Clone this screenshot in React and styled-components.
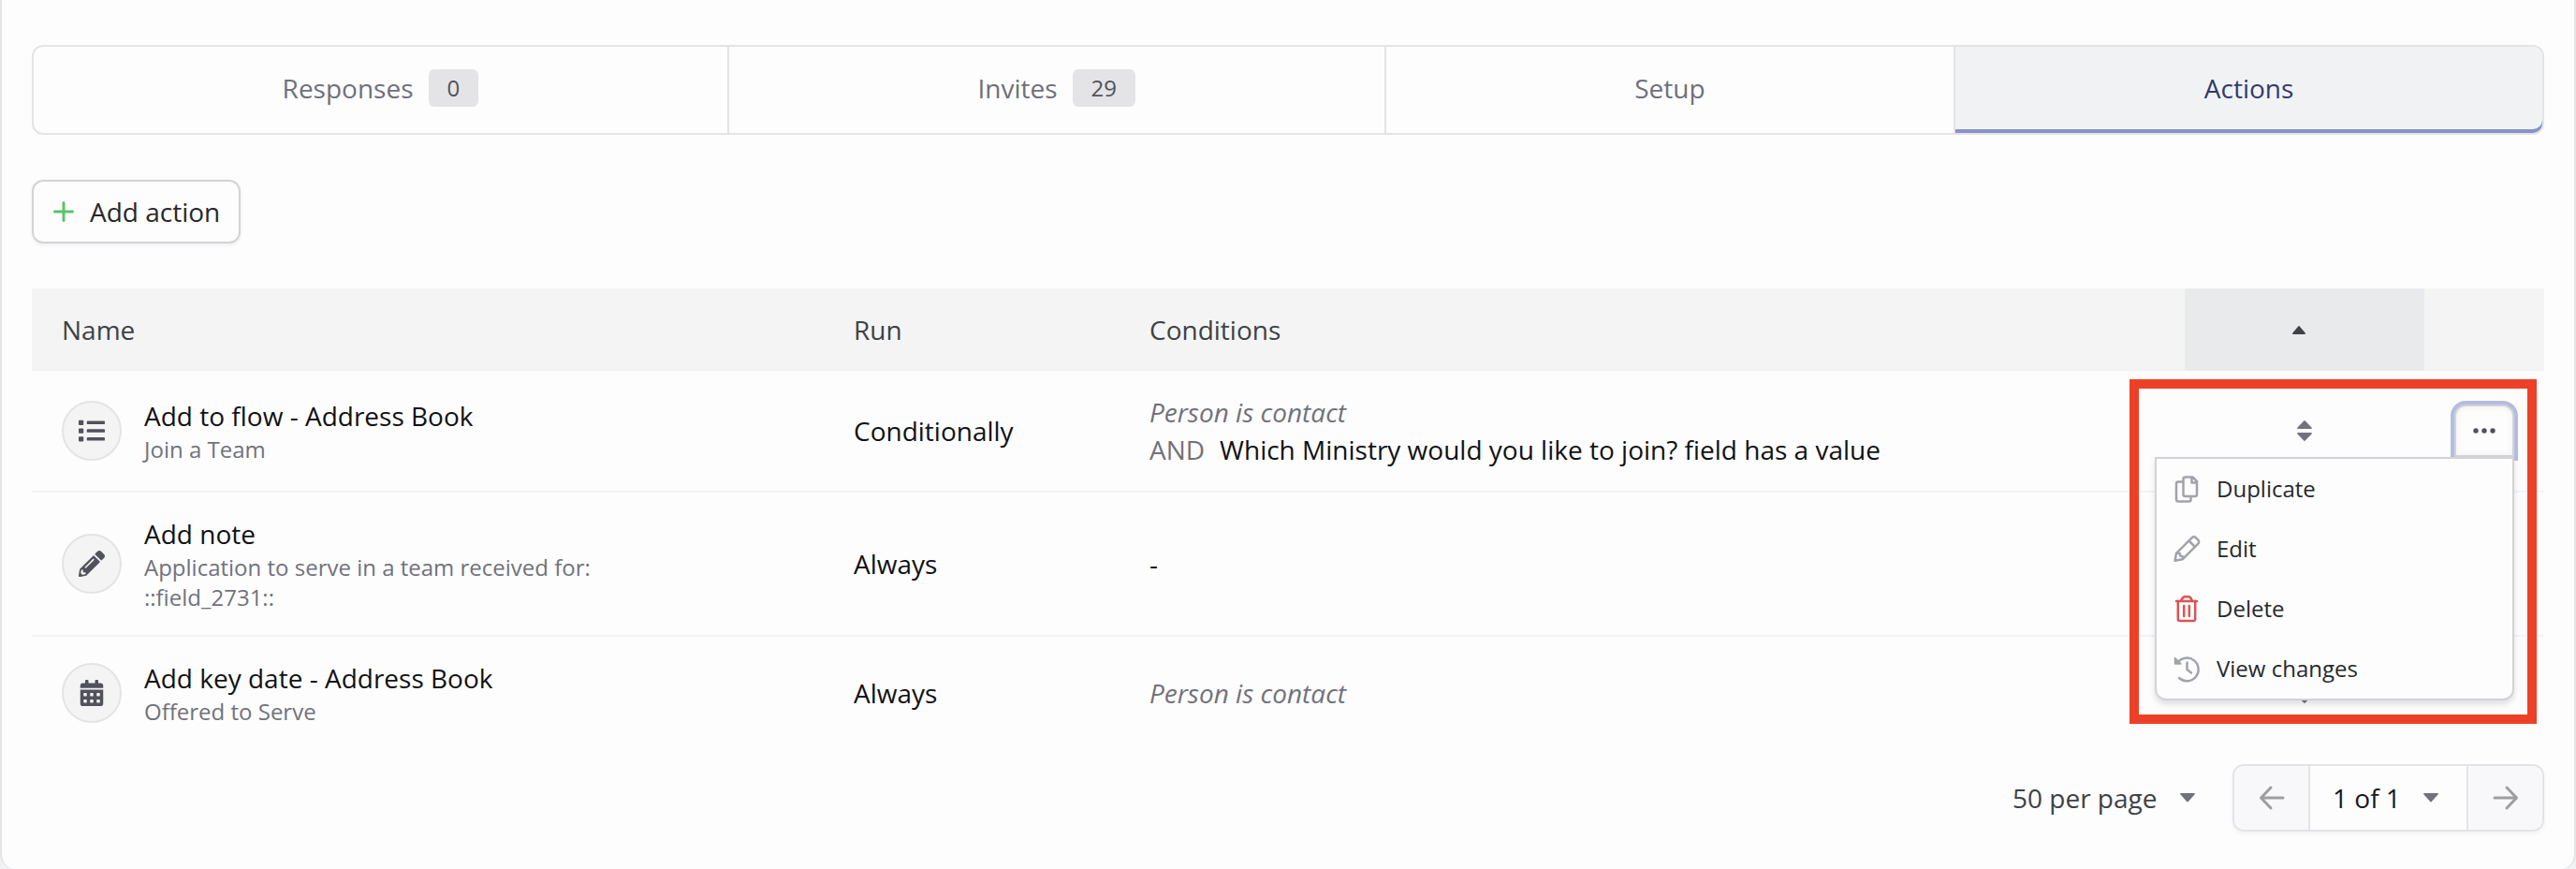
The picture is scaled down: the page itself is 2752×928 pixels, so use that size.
import React from "react";
import styled, { createGlobalStyle } from "styled-components";
import { FaList, FaPencilAlt, FaCalendarAlt } from "react-icons/fa";

const GlobalStyle = createGlobalStyle`
  * {
    box-sizing: border-box;
  }
  body {
    margin: 0;
    background: #f1f2f4;
    color: #111214;
    font-family: "Open Sans", "Noto Sans", sans-serif;
    font-size: 28px;
    line-height: 40px;
  }
  button, select {
    font: inherit;
    color: inherit;
    margin: 0;
    padding: 0;
    border: 0;
    background: none;
  }
`
const Card = styled.main`
  padding: 48px 32px 40px;
  background: #fdfdfe;
  border: solid #e3e4e6;
  border-width: 0 2px;
  border-radius: 0 0 16px 16px;
`
const Tabs = styled.nav`
  display: flex;
  height: 96px;
  border: 2px solid #e3e4e6;
  border-radius: 12px;
`
const Tab = styled.button`
  flex: 1 1 auto;
  display: flex;
  align-items: center;
  justify-content: center;
  gap: 16px;
  padding-bottom: 4px;
  color: ${({ $active }) => ($active ? "#333a6c" : "#6f7079")};
  background: ${({ $active }) => ($active ? "#f1f2f4" : "transparent")};
  box-shadow: ${({ $active }) => ($active ? "inset 0 -4px #8792c7" : "none")};

  &:not(:last-child) {
    border-right: 2px solid #e3e4e6;
  }
  &:last-child {
    border-radius: 0 10px 10px 0;
  }
`
const Badge = styled.span`
  padding: 0 20px;
  border-radius: 6px;
  background: #e4e4e6;
  color: #51525b;
  font-size: 24px;
`
const AddButton = styled.button`
  display: flex;
  align-items: center;
  gap: 16px;
  height: 68px;
  margin: 48px 0;
  padding: 0 20px;
  border: 2px solid #d2d3d6;
  border-radius: 12px;
  color: #27282b;
  box-shadow: 0 2px 4px rgba(0, 0, 0, 0.06);

  svg {
    color: #5cc368;
  }
`
const Table = styled.table`
  width: 100%;
  table-layout: fixed;
  border-collapse: collapse;
`
const HeadCell = styled.th`
  width: ${({ $width }) => $width || "auto"};
  height: 88px;
  padding: 0 32px;
  text-align: left;
  font-weight: 400;
  color: #404145;
  background: ${({ $sorted }) => ($sorted ? "#e9eaec" : "#f4f4f4")};
`
const SortButton = styled.button`
  display: flex;
  justify-content: center;
  width: 100%;
  padding-right: 12px;
  color: #404145;
`
const Row = styled.tr`
  &:not(:last-child) td {
    box-shadow: inset 0 -2px #f2f3f5;
    padding-bottom: 26px;
  }
`
const Cell = styled.td`
  padding: 24px 32px;
  vertical-align: middle;
`
const NameBox = styled.div`
  display: flex;
  align-items: center;
  gap: 24px;
`
const RoundIcon = styled.span`
  display: flex;
  align-items: center;
  justify-content: center;
  flex: none;
  width: 64px;
  height: 64px;
  border: 2px solid #e3e4e6;
  border-radius: 50%;
  background: #f4f4f5;
  color: #51525b;
`
const Detail = styled.div`
  font-size: 24px;
  line-height: 32px;
  color: #71727b;
  white-space: pre-line;
`
const Muted = styled.span`
  color: #71727b;
  margin-right: 16px;
`
const Contact = styled.em`
  color: #71727b;
`
const Handle = styled.div`
  display: flex;
  justify-content: center;
  color: #71727b;
`
const MenuAnchor = styled.div`
  position: relative;
  width: 64px;
  height: 56px;
`
const MoreButton = styled.button`
  display: flex;
  align-items: center;
  justify-content: center;
  width: 64px;
  height: 56px;
  border: 2px solid #d2d3d6;
  border-radius: 12px 12px 0 0;
  background: #fdfdfe;
  color: #51525b;
  box-shadow: 0 0 0 4px #b4bddf, inset 0 0 8px rgba(0, 0, 0, 0.06);
`
const Menu = styled.div`
  position: absolute;
  z-index: 2;
  top: 100%;
  right: 0;
  width: 384px;
  border: 2px solid #d2d3d6;
  border-radius: 0 0 12px 12px;
  background: #fdfdfe;
  box-shadow: 0 4px 6px rgba(0, 0, 0, 0.12);
`
const MenuItem = styled.button`
  display: flex;
  align-items: center;
  gap: 16px;
  width: 100%;
  height: 64px;
  padding: 0 16px;
  font-size: 24px;
  color: #27282b;

  svg {
    color: ${({ $danger }) => ($danger ? "#e05252" : "#a2a3ab")};
  }
`
const Highlight = styled.div`
  position: absolute;
  z-index: 3;
  top: -27px;
  right: -24px;
  width: 435px;
  height: 368px;
  border: 10px solid #ec4128;
  pointer-events: none;
`
const Footer = styled.footer`
  display: flex;
  align-items: center;
  justify-content: flex-end;
  gap: 40px;
  margin-top: 16px;
`
const SelectBox = styled.label`
  display: grid;
  align-items: center;
  justify-items: end;
  color: ${({ $strong }) => ($strong ? "#18191b" : "#404145")};

  > * {
    grid-area: 1 / 1;
  }
  svg {
    color: #71727b;
    pointer-events: none;
  }
`
const Select = styled.select`
  appearance: none;
  padding-right: 40px;
`
const Pager = styled.div`
  display: flex;
  height: 72px;
  border: 2px solid #e3e4e6;
  border-radius: 12px;
  overflow: hidden;
  box-shadow: 0 2px 4px rgba(0, 0, 0, 0.05);

  ${SelectBox} {
    padding: 0 30px 0 24px;
    border: solid #e3e4e6;
    border-width: 0 2px;
  }
`
const PagerButton = styled.button`
  display: flex;
  align-items: center;
  justify-content: center;
  width: 79px;
  background: #f8f8fa;
  color: #9d9ea1;
`

const Caret = () => (
    <svg width="16" height="10" viewBox="0 0 16 10" fill="currentColor">
        <path d="M1 0h14q1.5 .3.5 1.5L8.800 9q-.8.800-1.600 0L.5 1.500Q-.5.300 1 0z" />
    </svg>
)

const Line = ({ size = 32, width = 2.5, children }) => (
    <svg width={size} height={size} viewBox={`0 0 ${size} ${size}`} fill="none" stroke="currentColor"
        strokeWidth={width} strokeLinecap="round" strokeLinejoin="round">
        {children}
    </svg>
)

const PlusIcon = () => (
    <Line size={24} width={3}>
        <path d="M12 2.500v19M2.500 12h19" />
    </Line>
)

const SortIcon = () => (
    <svg width="16" height="22" viewBox="0 0 16 22" fill="currentColor">
        <path d="M7.200.5q.8-.8 1.600 0l6.700 7q1 1.300-.5 1.500H1Q-.5 8.800.5 7.500z" />
        <path d="M7.200 21.500q.8.800 1.600 0l6.700-7q1-1.300-.5-1.500H1q-1.500.200-.5 1.500z" />
    </svg>
)

const CopyIcon = () => (
    <Line>
        <path d="M14.500 3.500h8L27 8v14a2 2 0 0 1-2 2H14.500a2 2 0 0 1-2-2V5.500a2 2 0 0 1 2-2zM21.500 4v5.500H27" />
        <path d="M12 8.500H7a2 2 0 0 0-2 2v17a2 2 0 0 0 2 2h11.500a2 2 0 0 0 2-2v-3" />
    </Line>
)

const PencilIcon = () => (
    <Line>
        <path d="M3.500 28.800l1.500-8L21.800 4.200a2.800 2.800 0 0 1 4 0l2.500 2.500a2.800 2.800 0 0 1 0 4L11.500 27.300z" />
        <path d="M18.500 7.500l6.500 6.500M5.500 20.500l3.200.6.5 2.400 2.500.6.3 2.700" />
    </Line>
)

const TrashIcon = () => (
    <Line>
        <path d="M5 8h22M10 7.500l1.800-3q.7-1.200 2-1.200h4.400q1.300 0 2 1.200l1.800 3" />
        <path d="M6.800 8v19a2 2 0 0 0 2 2h14.400a2 2 0 0 0 2-2V8M13.200 13v11M18.800 13v11" />
    </Line>
)

const HistoryIcon = () => (
    <Line>
        <path d="M6.500 9.500A12.300 12.300 0 1 1 8 26M16.500 9.500v7.500l4.500 3.500" />
        <path d="M3.500 4.500v6.500H10z" fill="currentColor" strokeWidth="1.500" />
    </Line>
)

const tabs = [
    { label: "Responses", count: 0 },
    { label: "Invites", count: 29 },
    { label: "Setup" },
    { label: "Actions", active: true },
]

const rows = [
    {
        icon: <FaList size={28} />,
        name: "Add to flow - Address Book",
        detail: "Join a Team",
        run: "Conditionally",
        contact: true,
        condition: "Which Ministry would you like to join? field has a value",
        open: true,
    },
    {
        icon: <FaPencilAlt size={28} />,
        name: "Add note",
        detail: "Application to serve in a team received for:\n::field_2731::",
        run: "Always",
    },
    {
        icon: <FaCalendarAlt size={28} />,
        name: "Add key date - Address Book",
        detail: "Offered to Serve",
        run: "Always",
        contact: true,
    },
]

const ActionMenu = () => (
    <MenuAnchor>
        <MoreButton aria-label="More" aria-expanded="true">
            <svg width="24" height="6" viewBox="0 0 24 6" fill="currentColor">
                <circle cx="3" cy="3" r="2.700" />
                <circle cx="12" cy="3" r="2.700" />
                <circle cx="21" cy="3" r="2.700" />
            </svg>
        </MoreButton>
        <Menu role="menu">
            <MenuItem role="menuitem"><CopyIcon />Duplicate</MenuItem>
            <MenuItem role="menuitem"><PencilIcon />Edit</MenuItem>
            <MenuItem role="menuitem" $danger><TrashIcon />Delete</MenuItem>
            <MenuItem role="menuitem"><HistoryIcon />View changes</MenuItem>
        </Menu>
        <Highlight />
    </MenuAnchor>
)

const App = () => {
    return (
        <Card>
            <GlobalStyle />
            <Tabs>
                {tabs.map(({ label, count, active }) => (
                    <Tab key={label} $active={active}>
                        {label}
                        {count !== undefined && <Badge>{count}</Badge>}
                    </Tab>
                ))}
            </Tabs>
            <AddButton><PlusIcon />Add action</AddButton>
            <Table>
                <thead>
                    <tr>
                        <HeadCell $width="846px">Name</HeadCell>
                        <HeadCell $width="316px">Run</HeadCell>
                        <HeadCell>Conditions</HeadCell>
                        <HeadCell $width="256px" $sorted aria-sort="ascending">
                            <SortButton aria-label="Sort by order">
                                <svg width="14" height="9" viewBox="0 0 14 9" fill="currentColor">
                                    <path d="M6.300.500q.7-.800 1.400 0l6 7q.600 1.200-.7 1.500H1Q-.3 8.700.3 7.500z" />
                                </svg>
                            </SortButton>
                        </HeadCell>
                        <HeadCell $width="128px" />
                    </tr>
                </thead>
                <tbody>
                    {rows.map(({ icon, name, detail, run, contact, condition, open }) => (
                        <Row key={name}>
                            <Cell>
                                <NameBox>
                                    <RoundIcon>{icon}</RoundIcon>
                                    <div>
                                        {name}
                                        <Detail>{detail}</Detail>
                                    </div>
                                </NameBox>
                            </Cell>
                            <Cell>{run}</Cell>
                            <Cell>
                                {contact ? <Contact>Person is contact</Contact> : "-"}
                                {condition && <div><Muted>AND</Muted>{condition}</div>}
                            </Cell>
                            <Cell><Handle><SortIcon /></Handle></Cell>
                            <Cell>{open && <ActionMenu />}</Cell>
                        </Row>
                    ))}
                </tbody>
            </Table>
            <Footer>
                <SelectBox>
                    <Select aria-label="Rows per page" defaultValue="50">
                        <option value="50">50 per page</option>
                    </Select>
                    <Caret />
                </SelectBox>
                <Pager>
                    <PagerButton aria-label="Previous page">
                        <Line size={28} width={3}><path d="M26 14H3M13 3L2.500 14 13 25" /></Line>
                    </PagerButton>
                    <SelectBox $strong>
                        <Select aria-label="Page" defaultValue="1">
                            <option value="1">1 of 1</option>
                        </Select>
                        <Caret />
                    </SelectBox>
                    <PagerButton aria-label="Next page">
                        <Line size={28} width={3}><path d="M2 14h23M15 3l10.500 11L15 25" /></Line>
                    </PagerButton>
                </Pager>
            </Footer>
        </Card>
    );
};

export default App;
